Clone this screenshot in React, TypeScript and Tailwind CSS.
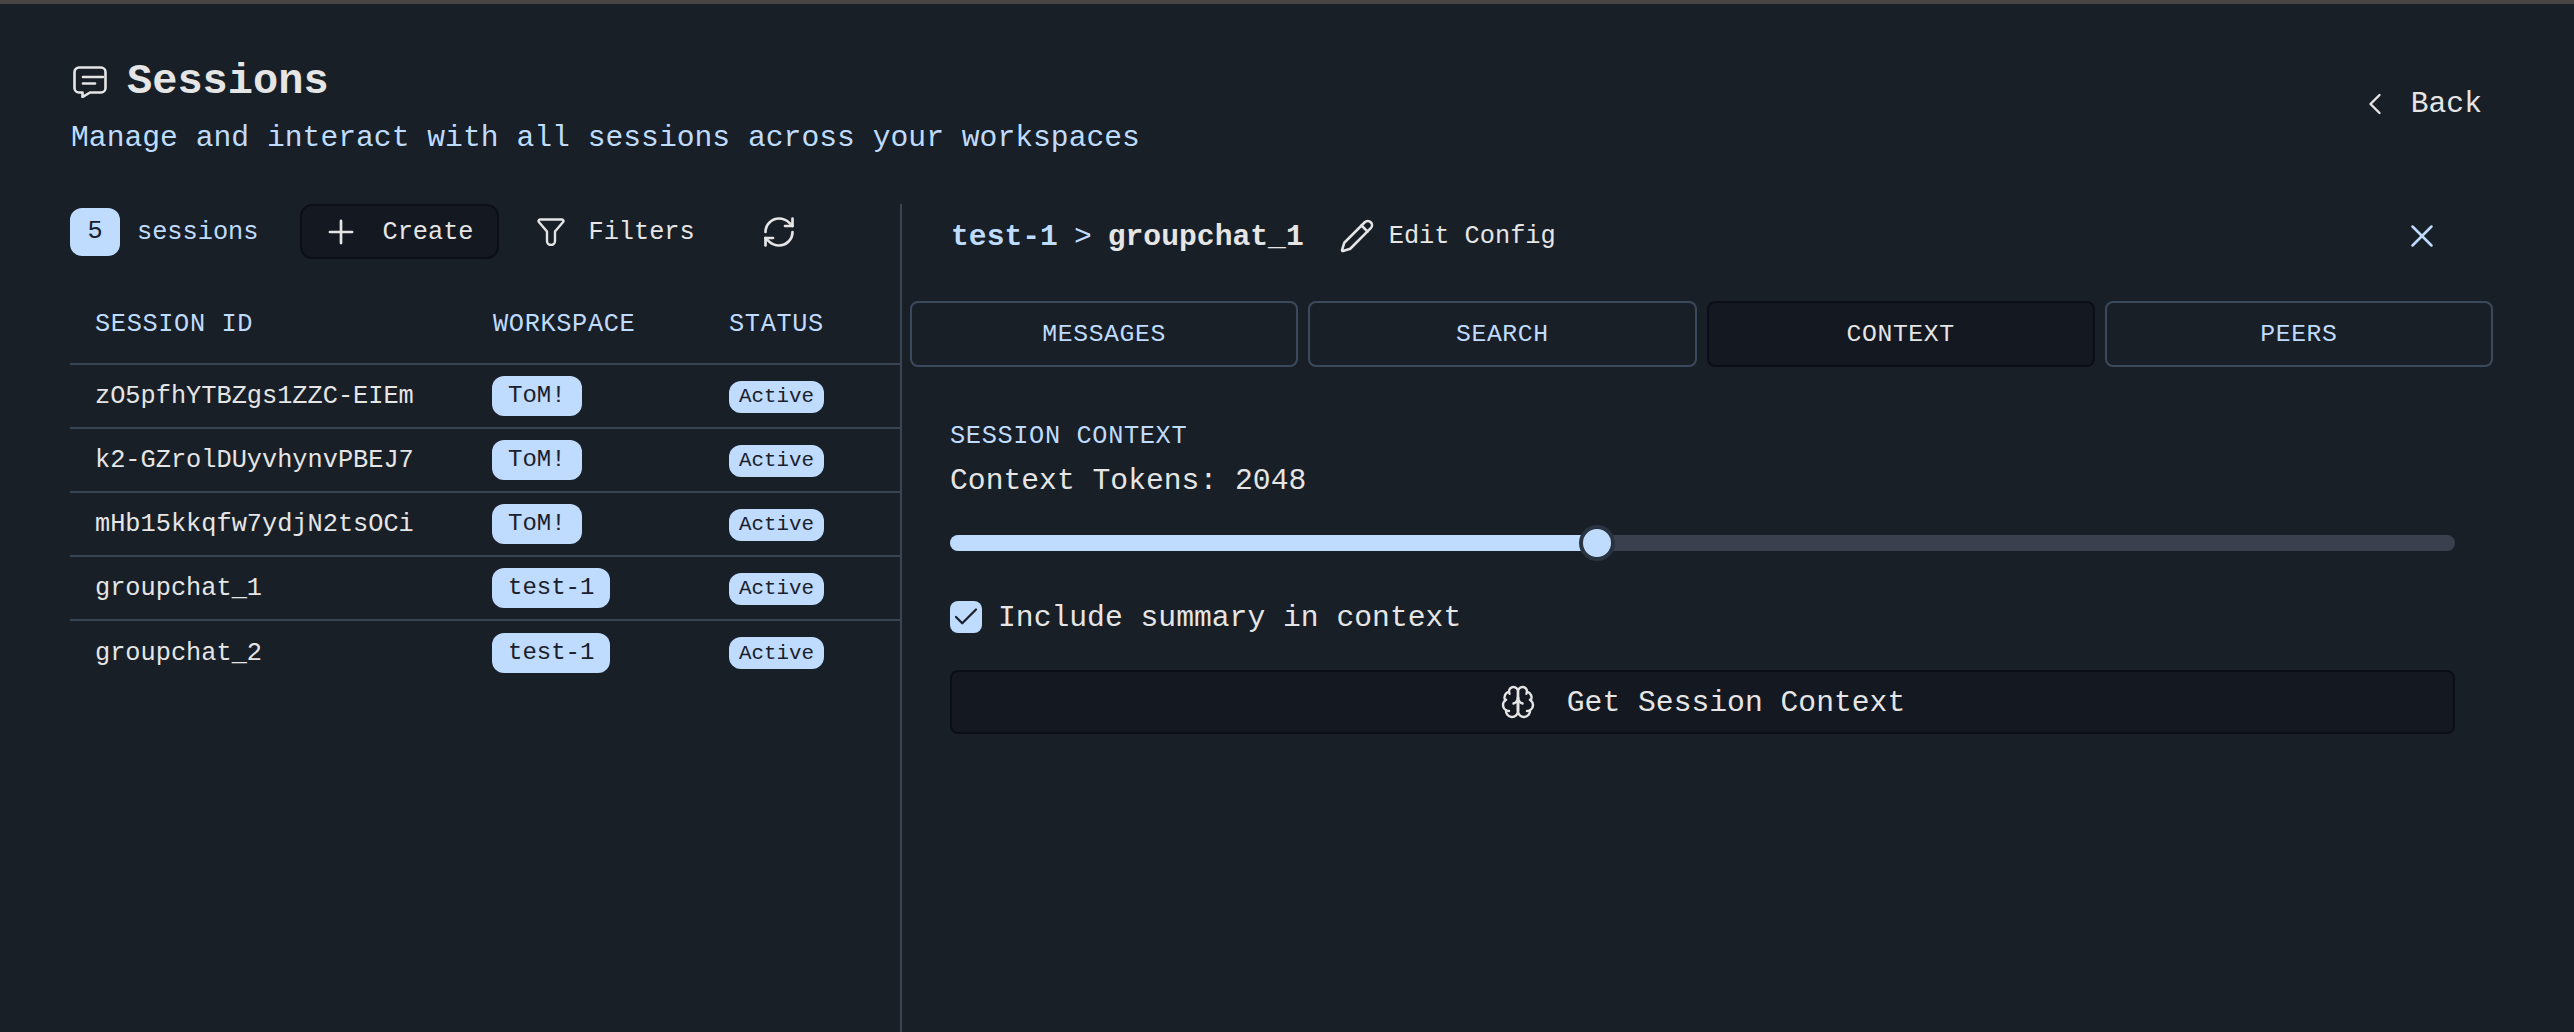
import React from 'react';
import { Check, ChevronLeft, Pencil, Plus, RefreshCw, X } from 'lucide-react';

const sessions = [
  { id: 'zO5pfhYTBZgs1ZZC-EIEm', workspace: 'ToM!' },
  { id: 'k2-GZrolDUyvhynvPBEJ7', workspace: 'ToM!' },
  { id: 'mHb15kkqfw7ydjN2tsOCi', workspace: 'ToM!' },
  { id: 'groupchat_1', workspace: 'test-1' },
  { id: 'groupchat_2', workspace: 'test-1' },
];

const tabs = ['Messages', 'Search', 'Context', 'Peers'];

const ChatIcon = () => (
  <svg className="ml-0.5" width="34" height="32" viewBox="0 0 34 32" fill="none" stroke="currentColor" strokeWidth="2.6" strokeLinecap="round" strokeLinejoin="round">
    <path d="M6 1.5h22a4.5 4.5 0 0 1 4.5 4.5v16a4.5 4.5 0 0 1-4.5 4.5H17l-7.5 4.5v-4.5H6a4.5 4.5 0 0 1-4.5-4.5V6A4.5 4.5 0 0 1 6 1.5z" />
    <path d="M10 11h20" />
    <path d="M10 17.5h12" />
  </svg>
);

const FunnelIcon = () => (
  <svg width="28" height="28" viewBox="0 0 28 28" fill="none" stroke="currentColor" strokeWidth="2.4" strokeLinecap="round" strokeLinejoin="round">
    <path d="M3 1.5h22a1.5 1.5 0 0 1 1.1 2.5L18 13.5V23a4 4 0 0 1-8 0V13.5L1.9 4A1.5 1.5 0 0 1 3 1.5z" />
  </svg>
);

const BrainIcon = () => (
  <svg width="36" height="36" viewBox="0 0 24 24" fill="none" stroke="currentColor" strokeWidth="1.6" strokeLinecap="round" strokeLinejoin="round">
    <path d="M12 5a3 3 0 1 0-5.997.125 4 4 0 0 0-2.526 5.77 4 4 0 0 0 .556 6.588A4 4 0 1 0 12 18Z" />
    <path d="M12 5a3 3 0 1 1 5.997.125 4 4 0 0 1 2.526 5.77 4 4 0 0 1-.556 6.588A4 4 0 1 1 12 18Z" />
    <path d="M15 13a4.5 4.5 0 0 1-3-4 4.5 4.5 0 0 1-3 4" />
    <path d="M12 18V9" />
    <path d="M17.599 6.5a3 3 0 0 0 .399-1.375" />
    <path d="M6.003 5.125A3 3 0 0 0 6.401 6.5" />
    <path d="M3.477 10.896a4 4 0 0 1 .585-.396" />
    <path d="M19.938 10.5a4 4 0 0 1 .585.396" />
    <path d="M6 18a4 4 0 0 1-1.967-.516" />
    <path d="M19.967 17.484A4 4 0 0 1 18 18" />
  </svg>
);

const App: React.FC = () => {
  return (
    <div className="flex h-screen flex-col overflow-hidden bg-[#181f27] font-['Liberation_Mono',monospace] text-[#e5e5e5]">
      <div className="h-1 shrink-0 bg-[#4a4545]" />

      {/* Page header */}
      <header className="flex items-center justify-between pl-[71px] pr-[92px] pt-[54px]">
        <div>
          <h1 className="flex h-12 items-center gap-5 text-[42px] font-bold leading-none">
            <ChatIcon />
            Sessions
          </h1>
          <p className="mt-3 text-[29.7px] leading-10 text-[#bfdbfe]">
            Manage and interact with all sessions across your workspaces
          </p>
        </div>
        <button className="mb-2 flex items-center gap-[18px] text-[29.7px] leading-10">
          <ChevronLeft className="size-9" strokeWidth={1.6} />
          Back
        </button>
      </header>

      <main className="mt-[46px] flex min-h-0 flex-1 pl-[70px]">
        {/* Session list */}
        <section className="w-[832px] shrink-0 border-r-2 border-[#3a4553]">
          <div className="flex h-[55px] items-center text-[25.3px]">
            <span className="flex h-12 w-[50px] items-center justify-center rounded-xl bg-[#bfdbfe] text-[#1a202c]">5</span>
            <span className="ml-[17px] pt-0.5 text-[#bfdbfe]">sessions</span>
            <button className="ml-[42px] flex h-[55px] w-[199px] items-center gap-[22px] rounded-xl border-2 border-[#0c0f18] bg-[#141821] pl-5">
              <Plus className="size-[38px]" strokeWidth={1.7} />
              <span className="pt-0.5">Create</span>
            </button>
            <button className="ml-[38px] flex items-center gap-[23px]">
              <FunnelIcon />
              <span className="pt-0.5">Filters</span>
            </button>
            <button className="ml-[66px]">
              <RefreshCw className="size-9" strokeWidth={1.8} />
            </button>
          </div>

          <table className="mt-[23px] w-full table-fixed border-collapse text-[25.3px]">
            <colgroup>
              <col className="w-[398px]" />
              <col className="w-[236px]" />
              <col />
            </colgroup>
            <thead>
              <tr className="h-[82px] border-b-2 border-[#3a4553] text-left uppercase tracking-wide text-[#bfdbfe]">
                <th className="pl-[25px] pt-1 font-normal">Session ID</th>
                <th className="pl-[25px] pt-1 font-normal">Workspace</th>
                <th className="pl-[25px] pt-1 font-normal">Status</th>
              </tr>
            </thead>
            <tbody>
              {sessions.map((session, i) => (
                <tr key={session.id} className={`h-16 ${i < sessions.length - 1 ? 'border-b-2 border-[#3a4553]' : ''}`}>
                  <td className="pl-[25px] pt-0.5">{session.id}</td>
                  <td className="pl-6">
                    <span className="inline-flex h-10 items-center rounded-xl bg-[#bfdbfe] px-4 text-2xl text-[#1a202c]">{session.workspace}</span>
                  </td>
                  <td className="pl-[25px]">
                    <span className="inline-flex h-8 items-center rounded-xl bg-[#bfdbfe] px-2.5 text-[20.8px] text-[#1a202c]">Active</span>
                  </td>
                </tr>
              ))}
            </tbody>
          </table>
        </section>

        {/* Session detail */}
        <section className="min-w-0 flex-1 pl-2 pr-[81px]">
          <div className="flex h-16 items-center pl-[41px] pr-[52px]">
            <span className="pt-0.5 text-[29.7px] font-bold text-[#bfdbfe]">test-1</span>
            <span className="mx-4 pt-0.5 text-[29.7px] text-[#bfdbfe]">&gt;</span>
            <span className="pt-0.5 text-[29.7px] font-bold">groupchat_1</span>
            <button className="ml-[35px] flex items-center gap-3.5 text-[25.3px]">
              <Pencil className="size-9" strokeWidth={1.7} />
              <span className="pt-0.5">Edit Config</span>
            </button>
            <X className="ml-auto size-[38px] text-[#bfdbfe]" strokeWidth={1.6} />
          </div>

          <div className="mt-[33px] grid grid-cols-4 gap-2.5">
            {tabs.map((tab) => (
              <button
                key={tab}
                className={`h-[66px] rounded-lg border-2 pt-0.5 text-[24.75px] uppercase tracking-wide ${
                  tab === 'Context' ? 'border-[#0b0e18] bg-[#141821] text-[#e5e5e5]' : 'border-[#3a4a5c] text-[#bfdbfe]'
                }`}
              >
                {tab}
              </button>
            ))}
          </div>

          <div className="pl-10 pr-[38px]">
            <h2 className="mt-[52px] text-[25.3px] uppercase leading-9 tracking-wide text-[#bfdbfe]">Session Context</h2>
            <p className="mt-1.5 text-[29.7px] leading-10">Context Tokens: 2048</p>

            {/* Slider */}
            <div className="relative mt-[34px] h-4 rounded-full bg-[#3a404e]">
              <div className="h-full w-[43%] rounded-l-full bg-[#bfdbfe]" />
              <div className="absolute left-[43%] top-1/2 size-9 -translate-x-1/2 -translate-y-1/2 rounded-full border-4 border-[#2a3340] bg-[#bfdbfe]" />
            </div>

            <label className="mt-[45px] flex items-center gap-4 text-[29.7px] leading-10">
              <span className="flex size-8 items-center justify-center rounded-lg bg-[#bfdbfe] text-[#1a202c]">
                <Check className="size-[30px]" strokeWidth={1.8} />
              </span>
              <span className="pt-0.5">Include summary in context</span>
            </label>

            <button className="mt-8 flex h-16 w-full items-center justify-center gap-[31px] rounded-lg border-2 border-[#0b0e18] bg-[#141821] text-[29.7px]">
              <BrainIcon />
              <span className="pt-0.5">Get Session Context</span>
            </button>
          </div>
        </section>
      </main>
    </div>
  );
};

export default App;
